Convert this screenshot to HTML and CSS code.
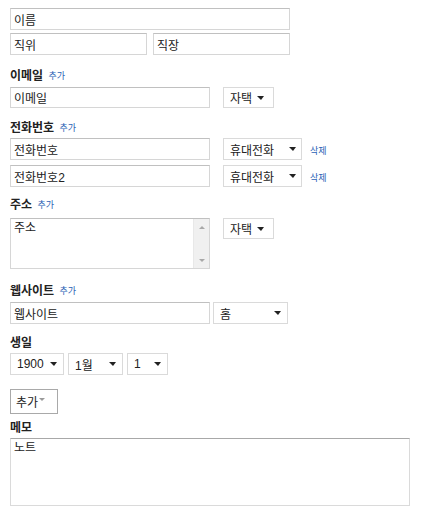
FILE: index.html
```html
<!DOCTYPE html>
<html lang="ko">
<head>
<meta charset="utf-8">
<link rel="stylesheet" href="styles.css">
</head>
<body>
<div class="form">
  <input class="field field-full" value="이름">
  <div class="row row-name">
    <input class="field field-half" value="직위">
    <input class="field field-half" value="직장">
  </div>

  <section class="group g-email">
    <div class="label">이메일 <a class="add">추가</a></div>
    <div class="row">
      <input class="field field-main" value="이메일">
      <div class="select sel-home"><span>자택</span><i class="caret"></i></div>
    </div>
  </section>

  <section class="group g-phone">
    <div class="label">전화번호 <a class="add">추가</a></div>
    <div class="row">
      <input class="field field-main" value="전화번호">
      <div class="select sel-mobile"><span>휴대전화</span><i class="caret"></i></div>
      <a class="del">삭제</a>
    </div>
    <div class="row row-second">
      <input class="field field-main" value="전화번호2">
      <div class="select sel-mobile"><span>휴대전화</span><i class="caret"></i></div>
      <a class="del">삭제</a>
    </div>
  </section>

  <section class="group g-address">
    <div class="label">주소 <a class="add">추가</a></div>
    <div class="row">
      <div class="area">
        <textarea class="area-text">주소</textarea>
        <div class="scrollbar"><i class="sb-up"></i><i class="sb-down"></i></div>
      </div>
      <div class="select sel-home"><span>자택</span><i class="caret"></i></div>
    </div>
  </section>

  <section class="group g-web">
    <div class="label">웹사이트 <a class="add">추가</a></div>
    <div class="row row-web">
      <input class="field field-main" value="웹사이트">
      <div class="select sel-web"><span>홈</span><i class="caret"></i></div>
    </div>
  </section>

  <section class="group g-birth">
    <div class="label">생일</div>
    <div class="row row-birth">
      <div class="select sel-year"><span>1900</span><i class="caret"></i></div>
      <div class="select sel-month"><span>1월</span><i class="caret"></i></div>
      <div class="select sel-day"><span>1</span><i class="caret"></i></div>
    </div>
  </section>

  <button class="more">추가<i class="caret caret-gray"></i></button>

  <section class="group g-memo">
    <div class="label">메모</div>
    <textarea class="memo">노트</textarea>
  </section>
</div>
</body>
</html>
```

FILE: styles.css
```css
* { box-sizing: border-box; }

html, body {
  margin: 0;
  padding: 0;
  background: #ffffff;
}

body {
  font-family: "Liberation Sans", "Noto Sans CJK KR", sans-serif;
  font-size: 12px;
  color: #222222;
}

.form {
  padding: 8px 0 0 10px;
  display: flex;
  flex-direction: column;
  align-items: flex-start;
}

.field {
  display: block;
  height: 22px;
  margin: 0;
  padding: 0 3px;
  border: 1px solid #d6d6d6;
  border-top-color: #c0c0c0;
  border-radius: 0;
  font-family: "Liberation Sans", "Noto Sans CJK KR", sans-serif;
  font-size: 12px;
  color: #222222;
  background: #ffffff;
  outline: none;
}

.field-full { width: 280px; }
.field-half { width: 137px; }
.field-main { width: 200px; height: 21px; }

.row {
  display: flex;
  align-items: center;
  gap: 13px;
}

.row-name { margin-top: 3px; gap: 6px; }
.row-second { margin-top: 5px; }
.row-web { gap: 3px; }
.row-web .field-main { height: 22px; }
.row-birth { gap: 4px; }
.g-phone .field-main { height: 22px; }

.group { display: flex; flex-direction: column; }

.label {
  height: 16px;
  line-height: 16px;
  font-weight: bold;
  font-size: 12px;
  color: #222222;
  margin-bottom: 3px;
  white-space: nowrap;
}

.add {
  font-weight: normal;
  font-size: 9px;
  color: #2a62b5;
  margin-left: 2px;
  vertical-align: 1px;
}

.del {
  font-size: 9px;
  color: #2a62b5;
  margin-left: -5px;
  margin-top: 3px;
}

.g-email { margin-top: 13px; }
.g-phone { margin-top: 12px; }
.g-phone .label { margin-bottom: 2px; }
.g-address { margin-top: 10px; }
.g-address .label { margin-bottom: 5px; }
.g-address .row { align-items: flex-start; }
.g-web { margin-top: 14px; }
.g-birth { margin-top: 11px; }
.g-birth .label { margin-bottom: 2px; }
.g-memo { margin-top: 6px; }
.g-memo .label { margin-bottom: 2px; }

.select {
  display: flex;
  align-items: center;
  justify-content: space-between;
  height: 21px;
  padding: 0 7px 0 6px;
  border: 1px solid #dadada;
  background: #ffffff;
  font-size: 12px;
  color: #222222;
  white-space: nowrap;
}

.sel-home { width: 51px; padding-right: 9px; }
.sel-mobile { width: 79px; height: 22px; padding-right: 5px; }
.sel-web { width: 75px; height: 22px; padding-right: 6px; }
.sel-year { width: 54px; height: 22px; padding-right: 6px; }
.sel-month { width: 55px; height: 22px; padding-right: 6px; }
.sel-day { width: 41px; height: 22px; padding-right: 6px; }

.caret {
  display: block;
  width: 0;
  height: 0;
  border-left: 4px solid transparent;
  border-right: 3px solid transparent;
  border-top: 4px solid #222222;
}

.caret-gray {
  border-left-width: 3px;
  border-right-width: 3px;
  border-top: 3px solid #9a9a9a;
  margin-left: 1px;
  margin-top: -4px;
}

.area {
  display: flex;
  width: 200px;
  height: 51px;
  border: 1px solid #d6d6d6;
  border-top-color: #c0c0c0;
  background: #ffffff;
}

.area-text {
  flex: 1;
  border: none;
  outline: none;
  resize: none;
  margin: 0;
  padding: 1px 3px;
  font-family: "Liberation Sans", "Noto Sans CJK KR", sans-serif;
  font-size: 12px;
  line-height: 16px;
  color: #222222;
  background: transparent;
  overflow: hidden;
}

.scrollbar {
  width: 16px;
  background: #f0f0f0;
  border-left: 1px solid #e8e8e8;
  display: flex;
  flex-direction: column;
  align-items: center;
  justify-content: space-between;
  padding: 7px 0 6px;
}

.sb-up, .sb-down {
  display: block;
  width: 0;
  height: 0;
  border-left: 3px solid transparent;
  border-right: 3px solid transparent;
}
.sb-up { border-bottom: 3px solid #a8a8a8; }
.sb-down { border-top: 3px solid #a8a8a8; }

.more {
  display: flex;
  align-items: center;
  margin-top: 14px;
  width: 48px;
  height: 25px;
  padding: 0 0 0 5px;
  border: 1px solid #a9a9a9;
  background: #ffffff;
  font-family: "Liberation Sans", "Noto Sans CJK KR", sans-serif;
  font-size: 12px;
  color: #222222;
  border-radius: 0;
}

.memo {
  display: block;
  width: 400px;
  height: 68px;
  margin: 0;
  padding: 1px 3px;
  border: 1px solid #dadada;
  border-top-color: #a8a8a8;
  resize: none;
  outline: none;
  font-family: "Liberation Sans", "Noto Sans CJK KR", sans-serif;
  font-size: 12px;
  line-height: 16px;
  color: #222222;
}
```
